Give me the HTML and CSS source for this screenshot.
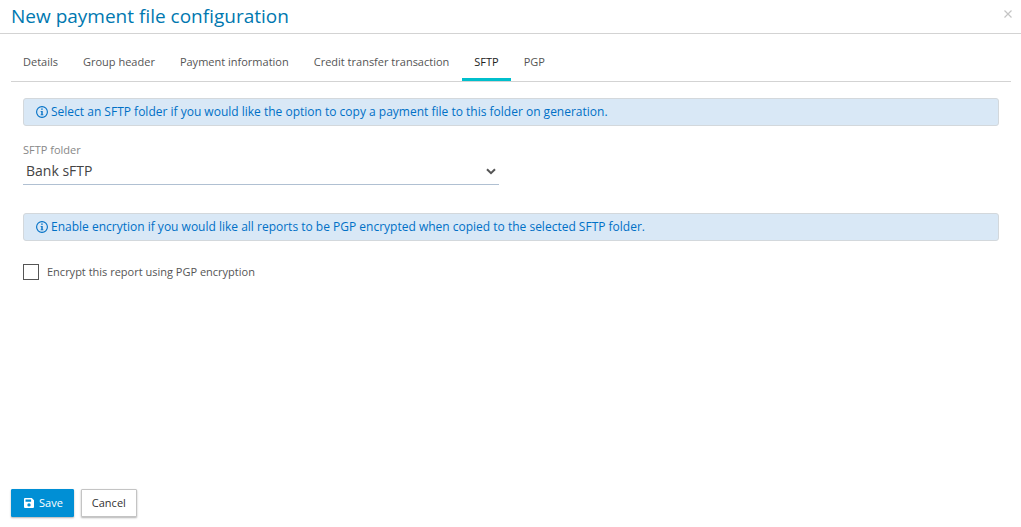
FILE: index.html
```
<!DOCTYPE html>
<html lang="en">
<head>
    <meta charset="UTF-8">
    <meta name="viewport" content="width=device-width, initial-scale=1.0">
    <title>New payment file configuration</title>
    <link rel="stylesheet" href="styles.css">
</head>
<body>
    <div class="header">
        <h1>New payment file configuration</h1>
        <button class="close" type="button" aria-label="Close">
            <svg width="8" height="8" viewBox="0 0 8 8"><path d="M0.5 0.5l7 7M7.5 0.5l-7 7" fill="none" stroke="currentColor" stroke-width="1.2"/></svg>
        </button>
    </div>
    <div class="main-content">
        <nav class="tabs">
            <a href="#">Details</a>
            <a href="#">Group header</a>
            <a href="#">Payment information</a>
            <a href="#">Credit transfer transaction</a>
            <a href="#" class="active">SFTP</a>
            <a href="#">PGP</a>
        </nav>
        <form class="panel" id="sftpForm">
            <div class="info">
                <svg width="12" height="12" viewBox="0 0 12 12"><circle cx="6" cy="6" r="5.4" fill="none" stroke="currentColor" stroke-width="1.1"/><path d="M5.2 2.5h1.5v1.3H5.2zM4.6 4.9h2.1v3.5h.7v.9H4.6v-.9h.7V5.8h-.7z" fill="currentColor"/></svg>
                <span>Select an SFTP folder if you would like the option to copy a payment file to this folder on generation.</span>
            </div>
            <div class="field">
                <label for="folder">SFTP folder</label>
                <div class="select">
                    <select id="folder">
                        <option>Bank sFTP</option>
                    </select>
                    <svg width="10" height="7" viewBox="0 0 10 7"><path d="M1 1.2l4 4 4-4" fill="none" stroke="currentColor" stroke-width="2"/></svg>
                </div>
            </div>
            <div class="info">
                <svg width="12" height="12" viewBox="0 0 12 12"><circle cx="6" cy="6" r="5.4" fill="none" stroke="currentColor" stroke-width="1.1"/><path d="M5.2 2.5h1.5v1.3H5.2zM4.6 4.9h2.1v3.5h.7v.9H4.6v-.9h.7V5.8h-.7z" fill="currentColor"/></svg>
                <span>Enable encrytion if you would like all reports to be PGP encrypted when copied to the selected SFTP folder.</span>
            </div>
            <label class="check">
                <input type="checkbox"> Encrypt this report using PGP encryption
            </label>
        </form>
    </div>
    <div class="footer">
        <button class="save" type="submit" form="sftpForm">
            <svg width="10" height="10" viewBox="0 0 10 10"><path d="M1 0h6.8L10 2.2V9a1 1 0 0 1-1 1H1a1 1 0 0 1-1-1V1a1 1 0 0 1 1-1zM1.5 1.4v2.4h5.6V1.4zM5 5.2a1.7 1.7 0 1 0 0 3.4 1.7 1.7 0 0 0 0-3.4z" fill="currentColor" fill-rule="evenodd"/></svg>
            Save
        </button>
        <button class="cancel" type="button">Cancel</button>
    </div>
</body>
</html>
```

FILE: styles.css
```
* {
    box-sizing: border-box;
}
body {
    display: flex;
    flex-direction: column;
    min-height: 100vh;
    margin: 0;
    font-family: "Open Sans", sans-serif;
    font-size: 11px;
    line-height: 16px;
    color: #555;
    background: #fff;
}
button, select {
    font-family: inherit;
}
.header {
    display: flex;
    justify-content: space-between;
    align-items: flex-start;
    padding: 4px 9px 5px 11px;
    border-bottom: 1px solid #d3d3d3;
}
.header h1 {
    margin: 0;
    font-size: 19px;
    font-weight: 400;
    line-height: 24px;
    color: #0078b0;
}
.close {
    display: flex;
    margin: 6px 0 0;
    padding: 0;
    border: none;
    background: none;
    color: #c4c4c4;
    cursor: pointer;
}
.main-content {
    flex: 1;
    padding: 10px 10px 0 11px;
}
.tabs {
    display: flex;
    gap: 1px;
    border-bottom: 1px solid #d3d3d3;
}
.tabs a {
    padding: 10px 12px 8px;
    border-bottom: 3px solid transparent;
    color: #555;
    text-decoration: none;
}
.tabs a.active {
    border-bottom-color: #00bfcc;
    color: #222;
}
.panel {
    padding: 16px 12px 0;
}
.info {
    display: flex;
    align-items: center;
    gap: 3px;
    padding: 5px 12px;
    border: 1px solid #d3d8dc;
    border-radius: 3px;
    background: #d9e8f6;
    font-size: 12px;
    color: #0070c6;
}
.field {
    width: 50%;
    margin: 16px 0 28px;
    padding-right: 12px;
}
.field label {
    display: block;
    color: #888;
}
.select {
    position: relative;
    border-bottom: 1px solid #b0c0d2;
}
.select select {
    display: block;
    width: 100%;
    height: 26px;
    padding: 0 20px 1px 3px;
    border: none;
    background: none;
    appearance: none;
    font-size: 14px;
    color: #444;
}
.select svg {
    position: absolute;
    top: 10px;
    right: 3px;
    pointer-events: none;
}
.check {
    display: flex;
    align-items: center;
    gap: 8px;
    margin-top: 23px;
}
.check input {
    width: 16px;
    height: 16px;
    margin: 0;
    border: 1px solid #555;
    background: #fff;
    appearance: none;
}
.check input:checked {
    background: #008fd5;
}
.footer {
    display: flex;
    gap: 7px;
    padding: 0 11px 10px;
}
.footer button {
    display: flex;
    align-items: center;
    gap: 5px;
    height: 28px;
    padding: 0 10px 1px;
    border: 1px solid #c4c4c4;
    border-radius: 1px;
    background: #fff;
    box-shadow: 0 1px 2px rgba(0, 0, 0, 0.3);
    font-size: 11px;
    color: #333;
    cursor: pointer;
}
.footer button.save {
    padding: 0 10px 1px 12px;
    border-color: #008fd5;
    background: #008fd5;
    color: #fff;
}
```
